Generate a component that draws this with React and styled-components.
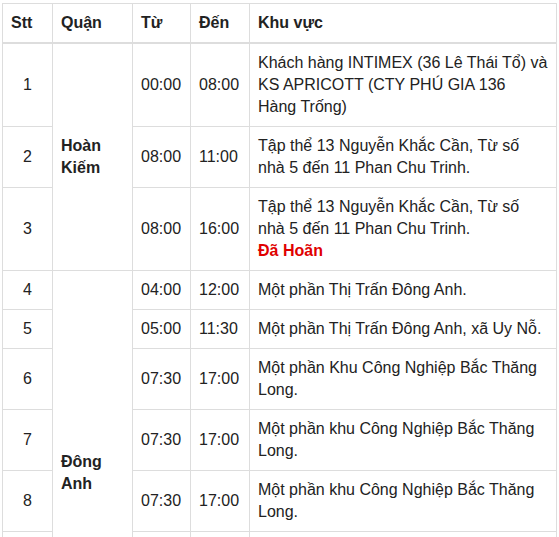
import React from "react";
import styled, { createGlobalStyle } from "styled-components";

const borderColor = "#dddddd";
const textColor = "#222222";

const GlobalStyle = createGlobalStyle`
  html, body {
    margin: 0;
    padding: 0;
    background: #ffffff;
  }
  body {
    font-family: "Liberation Sans", Arial, sans-serif;
    color: ${textColor};
  }
`;

const Page = styled.div`
  padding: 3px 0 0 2px;
`;

const Table = styled.table`
  width: 555px;
  table-layout: fixed;
  border-collapse: collapse;
  font-size: 16px;
  line-height: 22px;
  color: ${textColor};
`;

const Head = styled.th`
  box-sizing: border-box;
  width: ${(p) => (p.$w ? `${p.$w}px` : "auto")};
  padding: 8px;
  text-align: left;
  font-weight: bold;
  vertical-align: middle;
  border: 1px solid ${borderColor};
  border-bottom: 2px solid ${borderColor};
`;

const Cell = styled.td`
  padding: 8px;
  text-align: ${(p) => (p.$center ? "center" : "left")};
  font-weight: ${(p) => (p.$bold ? "bold" : "normal")};
  vertical-align: middle;
  border: 1px solid ${borderColor};
`;

const Postponed = styled.strong`
  display: block;
  color: #e00000;
`;

const rows = [
  { stt: 1, from: "00:00", to: "08:00", area: "Khách hàng INTIMEX (36 Lê Thái Tổ) và KS APRICOTT (CTY PHÚ GIA 136 Hàng Trống)", district: "Hoàn Kiếm", span: 3 },
  { stt: 2, from: "08:00", to: "11:00", area: "Tập thể 13 Nguyễn Khắc Cần, Từ số nhà 5 đến 11 Phan Chu Trinh." },
  { stt: 3, from: "08:00", to: "16:00", area: "Tập thể 13 Nguyễn Khắc Cần, Từ số nhà 5 đến 11 Phan Chu Trinh.", postponed: true },
  { stt: 4, from: "04:00", to: "12:00", area: "Một phần Thị Trấn Đông Anh.", district: "Đông Anh", span: 7 },
  { stt: 5, from: "05:00", to: "11:30", area: "Một phần Thị Trấn Đông Anh, xã Uy Nỗ." },
  { stt: 6, from: "07:30", to: "17:00", area: "Một phần Khu Công Nghiệp Bắc Thăng Long." },
  { stt: 7, from: "07:30", to: "17:00", area: "Một phần khu Công Nghiệp Bắc Thăng Long." },
  { stt: 8, from: "07:30", to: "17:00", area: "Một phần khu Công Nghiệp Bắc Thăng Long." },
  { stt: 9, from: "07:30", to: "17:00", area: "Một phần khu Công Nghiệp Bắc Thăng Long." },
  { stt: 10, from: "08:00", to: "17:00", area: "Một phần xã Kim Chung, xã Hải Bối, xã Vĩnh Ngọc, xã Võng La, xã Đại Mạch, xã Nam Hồng, xã Bắc Hồng." },
];

export default function App() {
  return (
    <Page>
      <GlobalStyle />
      <Table>
        <thead>
          <tr>
            <Head $w={50}>Stt</Head>
            <Head $w={80}>Quận</Head>
            <Head $w={58}>Từ</Head>
            <Head $w={59}>Đến</Head>
            <Head>Khu vực</Head>
          </tr>
        </thead>
        <tbody>
          {rows.map((r) => (
            <tr key={r.stt}>
              <Cell $center>{r.stt}</Cell>
              {r.district && (
                <Cell rowSpan={r.span} $bold>
                  {r.district}
                </Cell>
              )}
              <Cell>{r.from}</Cell>
              <Cell>{r.to}</Cell>
              <Cell>
                {r.area}
                {r.postponed && <Postponed>Đã Hoãn</Postponed>}
              </Cell>
            </tr>
          ))}
        </tbody>
      </Table>
    </Page>
  );
}
